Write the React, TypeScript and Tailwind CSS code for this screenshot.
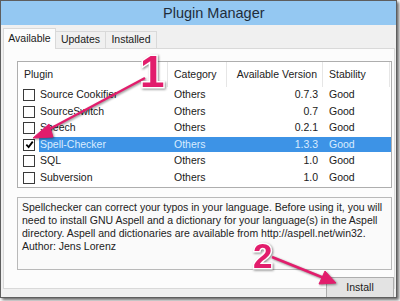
const plugins = [
    { name: 'Source Cookifier', version: '0.7.3', checked: false },
    { name: 'SourceSwitch', version: '0.7', checked: false },
    { name: 'Speech', version: '0.2.1', checked: false },
    { name: 'Spell-Checker', version: '1.3.3', checked: true },
    { name: 'SQL', version: '1.0', checked: false },
    { name: 'Subversion', version: '1.0', checked: false },
];

const Checkbox = ({ checked }: { checked: boolean }) => (
    <div className="flex h-[12px] w-[12px] shrink-0 items-center justify-center border border-[#3a3a3a] bg-white">
        {checked && (
            <svg viewBox="0 0 10 10" className="h-[9px] w-[9px]">
                <path d="M1.5 5.2 L4 7.8 L8.6 1.8" fill="none" stroke="#000" strokeWidth={2} />
            </svg>
        )}
    </div>
);

const Annotations = () => (
    <svg
        viewBox="0 0 400 301"
        className="pointer-events-none absolute left-0 top-0 h-[301px] w-[400px] drop-shadow-[1px_1px_1px_rgba(0,0,0,0.45)]"
    >
        <g fill="#e21d6c" stroke="#e21d6c">
            <line x1={145} y1={78} x2={44} y2={132} strokeWidth={2.5} />
            <polygon points="33,138 49,124 53,137" strokeWidth={1} />
            <line x1={272} y1={257} x2={324} y2={278} strokeWidth={2.5} />
            <polygon points="336,283 319,284 325,271" strokeWidth={1} />
        </g>
        <g fontFamily="Liberation Sans, Arial, sans-serif" fontWeight="bold" fill="#e21d6c" stroke="#fff" strokeWidth={3} paintOrder="stroke">
            <text x={140} y={87} fontSize={44}>1</text>
            <text x={253} y={268} fontSize={35}>2</text>
        </g>
    </svg>
);

const App = () => {
    return (
        <div className="relative h-[301px] w-[400px] overflow-hidden bg-white font-['Liberation_Sans',Arial,sans-serif] text-[#1a1a1a]">
            <div className="flex h-[298px] w-[397px] flex-col overflow-hidden border border-[#5e5e5e] bg-[#f0f0f0] shadow-[2px_2px_3px_rgba(0,0,0,0.6)]">

                <div className="h-[24px] shrink-0 bg-[#94c8f2] pl-[162px] text-[14.5px] leading-[24px] text-[#1f2d3b]">
                    Plugin Manager
                </div>

                <div className="mt-[3px] flex h-[20px] shrink-0 items-end pl-[2px] text-[10.5px]">
                    <div className="relative z-10 mb-[-1px] flex h-[21px] w-[53px] items-center justify-center border border-b-0 border-[#d9d9d9] bg-[#fcfcfc]">
                        Available
                    </div>
                    <div className="flex h-[17px] w-[50px] items-center justify-center border border-l-0 border-b-0 border-[#d9d9d9] bg-[#f0f0f0]">
                        Updates
                    </div>
                    <div className="flex h-[17px] w-[51px] items-center justify-center border border-l-0 border-b-0 border-[#d9d9d9] bg-[#f0f0f0]">
                        Installed
                    </div>
                </div>

                <div className="ml-[2px] h-[241px] w-[392px] shrink-0 border border-[#d9d9d9] bg-[#fcfcfc] pl-[13px] pt-[12px]">

                    <div className="h-[127px] w-[375px] border border-[#aeaeae] bg-white text-[10.5px]">
                        <div className="flex h-[25px] leading-[25px] text-[#222]">
                            <div className="w-[150px] border-r border-[#e6e6e6] pl-[6px]">Plugin</div>
                            <div className="w-[59px] border-r border-[#e6e6e6] pl-[6px]">Category</div>
                            <div className="w-[96px] border-r border-[#e6e6e6] pr-[5px] text-right">Available Version</div>
                            <div className="w-[67px] border-r border-[#e6e6e6] pl-[6px]">Stability</div>
                        </div>

                        {plugins.map((p) => (
                            <div key={p.name} className="flex h-[16.5px] items-center">
                                <div className="ml-[5px] mr-[4px]">
                                    <Checkbox checked={p.checked} />
                                </div>
                                <div
                                    className={
                                        p.checked
                                            ? 'flex h-[15px] flex-1 items-center bg-[#3d93e6] text-[#d9ecff]'
                                            : 'flex h-[15px] flex-1 items-center'
                                    }
                                >
                                    <div className="w-[129px] pl-[1px]">{p.name}</div>
                                    <div className="w-[59px] pl-[6px]">Others</div>
                                    <div className="w-[96px] pr-[5px] text-right">{p.version}</div>
                                    <div className="pl-[6px]">Good</div>
                                </div>
                            </div>
                        ))}
                    </div>

                    <div className="mt-[9px] h-[73px] w-[375px] whitespace-nowrap border border-[#b9b9b9] bg-[#fafafa] pl-[4px] pt-[3px] text-[10.5px] leading-[13px] text-[#222]">
                        Spellchecker can correct your typos in your language. Before using it, you will
                        <br />
                        need to install GNU Aspell and a dictionary for your language(s) in the Aspell
                        <br />
                        directory. Aspell and dictionaries are available from http://aspell.net/win32.
                        <br />
                        Author: Jens Lorenz
                    </div>

                    <div className="mt-[7px] flex justify-end">
                        <div className="flex h-[21px] w-[68px] items-center justify-center border border-[#adadad] bg-[#e3e3e3] text-[10.5px]">
                            Install
                        </div>
                    </div>
                </div>
            </div>

            <Annotations />
        </div>
    );
};

export default App;
